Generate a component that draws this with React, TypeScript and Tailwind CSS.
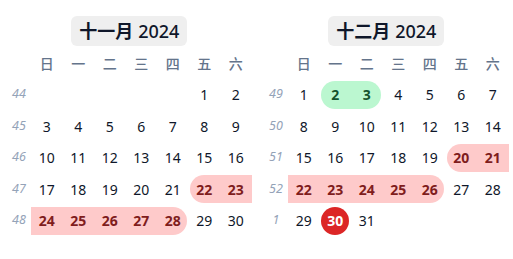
type Month = {
  nome: string
  ano: number
  inicio: number // dia da semana do dia 1 (0 = domingo)
  dias: number
  semanaInicial: number[]
  faixas: { de: number; ate: number; cor: 'red' | 'green' }[]
  hoje?: number
}

const diasSemana = ['日', '一', '二', '三', '四', '五', '六']

const meses: Month[] = [
  {
    nome: '十一月',
    ano: 2024,
    inicio: 5,
    dias: 30,
    semanaInicial: [44, 45, 46, 47, 48],
    faixas: [{ de: 22, ate: 28, cor: 'red' }],
  },
  {
    nome: '十二月',
    ano: 2024,
    inicio: 0,
    dias: 31,
    semanaInicial: [49, 50, 51, 52, 1],
    faixas: [
      { de: 2, ate: 3, cor: 'green' },
      { de: 20, ate: 26, cor: 'red' },
    ],
    hoje: 30,
  },
]

function Dia({ dia, mes }: { dia: number | null; mes: Month }) {
  if (dia === null) return <div className="h-[31.5px] w-[31.5px]" />

  const faixa = mes.faixas.find((f) => dia >= f.de && dia <= f.ate)
  const inicio = faixa && dia === faixa.de
  const fim = faixa && dia === faixa.ate
  const hoje = mes.hoje === dia

  let banda = ''
  if (faixa) {
    const cor = faixa.cor === 'red' ? 'bg-[#fecaca]' : 'bg-[#bbf7d0]'
    if (inicio && fim) banda = `${cor} left-[1.75px] right-[1.75px] rounded-full`
    else if (inicio) banda = `${cor} left-[1.75px] right-0 rounded-l-full`
    else if (fim) banda = `${cor} left-0 right-[1.75px] rounded-r-full`
    else banda = `${cor} left-0 right-0`
  }

  const texto = faixa
    ? faixa.cor === 'red'
      ? 'font-bold text-[#7f1d1d]'
      : 'font-bold text-[#14532d]'
    : 'text-[#0f172a]'

  return (
    <div className="relative flex h-[31.5px] w-[31.5px] items-center justify-center">
      {faixa && <div className={`absolute top-[1.75px] bottom-[1.75px] ${banda}`} />}
      {hoje ? (
        <span className="relative flex h-[28px] w-[28px] items-center justify-center rounded-full bg-[#dc2626] font-bold text-white">
          {dia}
        </span>
      ) : (
        <span className={`relative ${texto}`}>{dia}</span>
      )}
    </div>
  )
}

function Calendario({ mes }: { mes: Month }) {
  const celulas: (number | null)[] = []
  for (let i = 0; i < mes.inicio; i++) celulas.push(null)
  for (let d = 1; d <= mes.dias; d++) celulas.push(d)
  while (celulas.length % 7 !== 0) celulas.push(null)

  const semanas: (number | null)[][] = []
  for (let i = 0; i < celulas.length; i += 7) semanas.push(celulas.slice(i, i + 7))

  return (
    <div className="flex w-[244.5px] flex-col">
      <div className="flex justify-center">
        <div className="flex h-[30px] items-center gap-[5px] rounded-md bg-[#efefef] px-[8px] text-[18px] text-[#0f172a]">
          <span className="font-bold">{mes.nome}</span>
          <span className="font-medium">{mes.ano}</span>
        </div>
      </div>
      <div className="mt-[1px] flex h-[32px] items-center">
        <div className="w-[24px]" />
        {diasSemana.map((d) => (
          <div key={d} className="flex w-[31.5px] justify-center text-[14px] font-medium text-[#64748b]">
            {d}
          </div>
        ))}
      </div>
      {semanas.map((s, i) => (
        <div key={i} className="flex items-center text-[14px]">
          <div className="flex w-[24px] justify-center text-[12.5px] italic text-[#94a3b8]">
            {mes.semanaInicial[i]}
          </div>
          {s.map((d, j) => (
            <Dia key={j} dia={d} mes={mes} />
          ))}
        </div>
      ))}
    </div>
  )
}

export default function App() {
  return (
    <main
      className="flex h-[259px] w-[513px] gap-[12.5px] overflow-hidden bg-white pt-[16px] pl-[7px]"
      style={{ fontFamily: '"Noto Sans", "Noto Sans CJK SC", sans-serif' }}
    >
      {meses.map((m) => (
        <Calendario key={m.nome} mes={m} />
      ))}
    </main>
  )
}
